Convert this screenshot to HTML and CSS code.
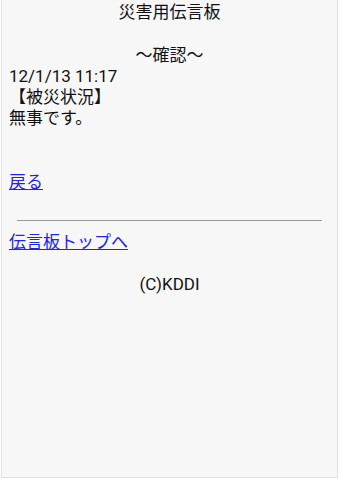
FILE: index.html
```html
<!DOCTYPE html>
<html lang="ja">
<head>
<meta charset="utf-8">
<link rel="stylesheet" href="styles.css">
</head>
<body>
<div class="frame">
  <div class="center">災害用伝言板</div>
  <div class="blank"></div>
  <div class="center">～確認～</div>
  <div class="line">12/1/13 11:17</div>
  <div class="line">【被災状況】</div>
  <div class="line">無事です。</div>
  <div class="blank"></div>
  <div class="blank"></div>
  <div class="line"><a href="#" class="link">戻る</a></div>
  <hr class="rule">
  <div class="line"><a href="#" class="link">伝言板トップへ</a></div>
  <div class="blank"></div>
  <div class="center">(C)KDDI</div>
</div>
</body>
</html>
```
FILE: styles.css
```css
html, body {
  margin: 0;
  padding: 0;
  background: #ffffff;
}
.frame {
  box-sizing: border-box;
  margin-left: 1px;
  width: 337px;
  height: 478px;
  border: 1px solid #e0e0e0;
  border-top: none;
  background: #f7f7f7;
  padding: 2px 7px 0 7px;
  font-family: Roboto, "Noto Sans CJK JP", sans-serif;
  font-size: 17px;
  line-height: 21.3px;
  color: #111111;
}
.center {
  text-align: center;
}
.blank {
  height: 21.3px;
}
.link {
  color: #2222ee;
  text-decoration: underline;
}
.rule {
  width: 95%;
  margin: 26px auto 11px auto;
  border: none;
  border-top: 1px solid #9a9a9a;
  height: 0;
}
```
